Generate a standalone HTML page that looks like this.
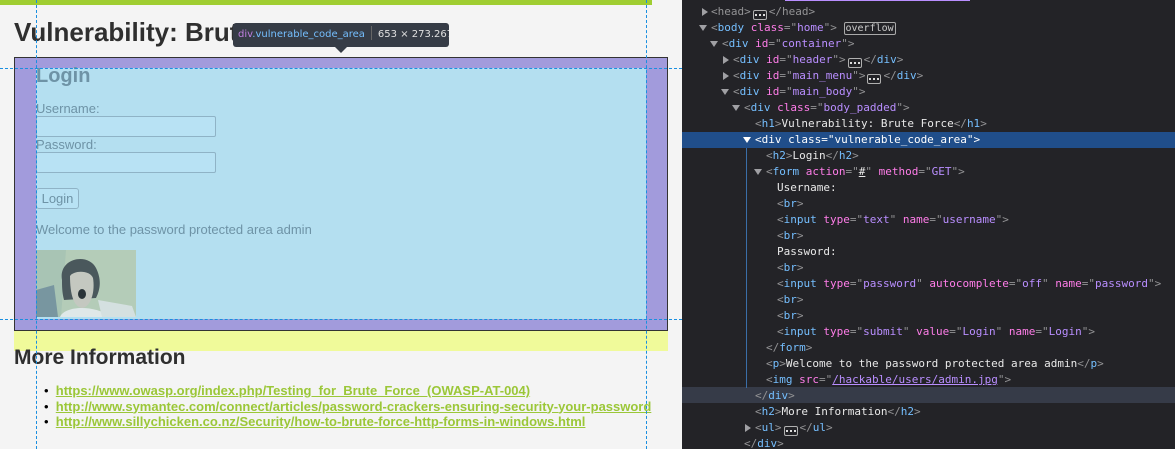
<!DOCTYPE html>
<html><head><meta charset="utf-8"><style>
*{margin:0;padding:0;box-sizing:border-box}
body{width:1175px;height:449px;overflow:hidden;background:#f4f4f4;font-family:"Liberation Sans",sans-serif;position:relative}
.abs{position:absolute}
#left{position:absolute;left:0;top:0;width:682px;height:449px;background:#f4f4f4;overflow:hidden}
h1{position:absolute;left:14px;top:17px;font-size:26px;color:#2f2f2f;font-weight:bold;white-space:nowrap}
.box{position:absolute;left:14px;top:57px;width:654px;height:274px;border:1px solid #333;background:#a29bdc}
.content{position:absolute;left:36px;top:68px;width:610px;height:251px;background:#b4dff0}
.txt{position:absolute;color:#6e93a6;font-size:13px;white-space:nowrap}
.inp{position:absolute;width:180px;height:21px;border:1px solid #8fb3c6;border-radius:2px;background:#b8e2f4}
.yellow{position:absolute;left:14px;top:331px;width:654px;height:20px;background:#f0fa9a}
.vl{position:absolute;top:0;height:449px;border-left:1px dashed #1a8fe0;width:0}
.hl{position:absolute;left:0;width:682px;border-top:1px dashed #1a8fe0;height:0}
a{color:#9bc738;font-weight:bold;font-size:13px;text-decoration:underline;white-space:nowrap}
#dev{position:absolute;left:682px;top:0;width:493px;height:449px;background:#232327;font-family:"DejaVu Sans Mono","Liberation Mono",monospace;font-size:11px;color:#e8e8e8;overflow:hidden}
.ln{position:absolute;height:16px;line-height:16px;white-space:nowrap}
.p{color:#939395}.t{color:#75bfff}.a{color:#ff7de9}.v{color:#b98eff}
.tri{position:absolute;width:0;height:0}
.down{border-left:4px solid transparent;border-right:4px solid transparent;border-top:6px solid #a0a0a4}
.right{border-top:4px solid transparent;border-bottom:4px solid transparent;border-left:6px solid #a0a0a4}
.dots{display:inline-flex;align-items:center;justify-content:center;gap:2px;border:1px solid #b0b0b0;border-radius:2px;width:14px;height:10px;vertical-align:-1px;margin:0 2px}
.dots i{display:block;width:2px;height:2px;background:#ddd}
</style></head><body>
<div id="left">
<div class="abs" style="left:0;top:0;width:652px;height:5px;background:#9fcd31"></div>
<h1>Vulnerability: Brute Force</h1>
<div class="box"></div>
<div class="content"></div>
<div class="txt" style="left:36px;top:65px;font-size:20px;font-weight:bold;color:#6e93a6">Login</div>
<div class="txt" style="left:36px;top:101px">Username:</div>
<div class="inp" style="left:36px;top:116px"></div>
<div class="txt" style="left:36px;top:137px">Password:</div>
<div class="inp" style="left:36px;top:152px"></div>
<div class="abs" style="left:36px;top:188px;width:43px;height:21px;border:1px solid #8fb3c6;border-radius:3px;background:#b8e2f4;font-size:13px;color:#6e93a6;text-align:center;line-height:19px">Login</div>
<div class="txt" style="left:36px;top:222px">Welcome to the password protected area admin</div>
<svg class="abs" style="left:36px;top:250px" width="100" height="67" viewBox="0 0 100 67">
<rect width="100" height="67" fill="#b4ccb8"/>
<path d="M0 0 L30 0 L25 67 L0 67Z" fill="#a8c4b4"/>
<path d="M0 40 L18 35 L22 67 L0 67Z" fill="#7896a0"/>
<path d="M26 30 C22 8 52 2 60 18 C66 30 64 40 60 48 L28 50 C26 42 26 36 26 30Z" fill="#4a585c"/>
<path d="M34 26 C38 20 54 20 57 28 C59 40 56 55 47 58 C38 58 34 45 34 26Z" fill="#c4c8c0"/>
<ellipse cx="46" cy="44" rx="4" ry="5" fill="#2a3438"/>
<path d="M24 67 C28 56 58 54 75 67Z" fill="#dfe8e8"/>
<path d="M62 50 L96 56 L100 67 L66 67Z" fill="#d4e0e0"/>
</svg>
<div class="yellow"></div>
<div class="abs" style="left:14px;top:346px;font-size:21px;font-weight:bold;color:#2f2f2f">More Information</div>
<div class="abs" style="left:44px;top:383px;line-height:15.5px;font-size:13px">
<div>•&nbsp; <a>https://www.owasp.org/index.php/Testing_for_Brute_Force_(OWASP-AT-004)</a></div>
<div>•&nbsp; <a>http://www.symantec.com/connect/articles/password-crackers-ensuring-security-your-password</a></div>
<div>•&nbsp; <a>http://www.sillychicken.co.nz/Security/how-to-brute-force-http-forms-in-windows.html</a></div>
</div>
<div class="vl" style="left:36px"></div>
<div class="vl" style="left:646px"></div>
<div class="hl" style="top:68px"></div>
<div class="hl" style="top:319px"></div>
<div class="abs" style="left:233px;top:23px;width:216px;height:24px;background:#363c46;border-radius:3px;font-family:'DejaVu Sans',sans-serif;font-size:10px;line-height:24px;white-space:nowrap;padding-left:5px;color:#e0e0e0;overflow:hidden"><span style="color:#c07fe0">div</span><span style="color:#75bfff">.vulnerable_code_area</span><span style="display:inline-block;width:1px;height:14px;background:#666;vertical-align:-3px;margin:0 6px"></span>653 × 273.267</div>
<div class="tri" style="left:335px;top:47px;border-left:6px solid transparent;border-right:6px solid transparent;border-top:6px solid #363c46"></div>
</div>
<div id="dev">
<div class="abs" style="left:0;top:132px;width:493px;height:16px;background:#204e8a"></div>
<div class="abs" style="left:0;top:387px;width:493px;height:16px;background:#363b48"></div>
<div class="abs" style="left:64px;top:148px;width:1px;height:240px;background:#3a6ea8"></div>
<div class="abs" style="left:103px;top:0;width:185px;height:1px;background:#b98eff"></div>
<div class="tri right" style="left:20px;top:8px"></div>
<div class="ln" style="left:29px;top:4px;color:#939395">&lt;head&gt;<span class="dots"><i></i><i></i><i></i></span>&lt;/head&gt;</div>
<div class="tri down" style="left:17px;top:25px"></div>
<div class="ln" style="left:29px;top:20px"><span class="p">&lt;</span><span class="t">body</span> <span class="a">class</span><span class="p">="</span><span class="v">home</span><span class="p">"&gt;</span> <span style="border:1px solid #aaa;border-radius:2px;padding:0 1px;color:#ccc;font-size:10px">overflow</span></div>
<div class="tri down" style="left:28px;top:41px"></div>
<div class="ln" style="left:40px;top:36px"><span class="p">&lt;</span><span class="t">div</span> <span class="a">id</span><span class="p">="</span><span class="v">container</span><span class="p">"&gt;</span></div>
<div class="tri right" style="left:41px;top:56px"></div>
<div class="ln" style="left:51px;top:52px"><span class="p">&lt;</span><span class="t">div</span> <span class="a">id</span><span class="p">="</span><span class="v">header</span><span class="p">"&gt;</span><span class="dots"><i></i><i></i><i></i></span><span class="p">&lt;/</span><span class="t">div</span><span class="p">&gt;</span></div>
<div class="tri right" style="left:41px;top:72px"></div>
<div class="ln" style="left:51px;top:68px"><span class="p">&lt;</span><span class="t">div</span> <span class="a">id</span><span class="p">="</span><span class="v">main_menu</span><span class="p">"&gt;</span><span class="dots"><i></i><i></i><i></i></span><span class="p">&lt;/</span><span class="t">div</span><span class="p">&gt;</span></div>
<div class="tri down" style="left:39px;top:89px"></div>
<div class="ln" style="left:51px;top:84px"><span class="p">&lt;</span><span class="t">div</span> <span class="a">id</span><span class="p">="</span><span class="v">main_body</span><span class="p">"&gt;</span></div>
<div class="tri down" style="left:50px;top:105px"></div>
<div class="ln" style="left:62px;top:100px"><span class="p">&lt;</span><span class="t">div</span> <span class="a">class</span><span class="p">="</span><span class="v">body_padded</span><span class="p">"&gt;</span></div>
<div class="ln" style="left:73px;top:116px"><span class="p">&lt;</span><span class="t">h1</span><span class="p">&gt;</span>Vulnerability: Brute Force<span class="p">&lt;/</span><span class="t">h1</span><span class="p">&gt;</span></div>
<div class="tri down" style="left:61px;top:137px;border-top-color:#fff"></div>
<div class="ln" style="left:73px;top:132px;color:#fff">&lt;div class="vulnerable_code_area"&gt;</div>
<div class="ln" style="left:84px;top:148px"><span class="p">&lt;</span><span class="t">h2</span><span class="p">&gt;</span>Login<span class="p">&lt;/</span><span class="t">h2</span><span class="p">&gt;</span></div>
<div class="tri down" style="left:72px;top:169px"></div>
<div class="ln" style="left:84px;top:164px"><span class="p">&lt;</span><span class="t">form</span> <span class="a">action</span><span class="p">="</span><span style="text-decoration:underline">#</span><span class="p">"</span> <span class="a">method</span><span class="p">="</span><span class="v">GET</span><span class="p">"&gt;</span></div>
<div class="ln" style="left:95px;top:180px">Username:</div>
<div class="ln" style="left:95px;top:196px"><span class="p">&lt;</span><span class="t">br</span><span class="p">&gt;</span></div>
<div class="ln" style="left:95px;top:212px"><span class="p">&lt;</span><span class="t">input</span> <span class="a">type</span><span class="p">="</span><span class="v">text</span><span class="p">"</span> <span class="a">name</span><span class="p">="</span><span class="v">username</span><span class="p">"&gt;</span></div>
<div class="ln" style="left:95px;top:228px"><span class="p">&lt;</span><span class="t">br</span><span class="p">&gt;</span></div>
<div class="ln" style="left:95px;top:244px">Password:</div>
<div class="ln" style="left:95px;top:260px"><span class="p">&lt;</span><span class="t">br</span><span class="p">&gt;</span></div>
<div class="ln" style="left:95px;top:276px"><span class="p">&lt;</span><span class="t">input</span> <span class="a">type</span><span class="p">="</span><span class="v">password</span><span class="p">"</span> <span class="a">autocomplete</span><span class="p">="</span><span class="v">off</span><span class="p">"</span> <span class="a">name</span><span class="p">="</span><span class="v">password</span><span class="p">"&gt;</span></div>
<div class="ln" style="left:95px;top:292px"><span class="p">&lt;</span><span class="t">br</span><span class="p">&gt;</span></div>
<div class="ln" style="left:95px;top:308px"><span class="p">&lt;</span><span class="t">br</span><span class="p">&gt;</span></div>
<div class="ln" style="left:95px;top:324px"><span class="p">&lt;</span><span class="t">input</span> <span class="a">type</span><span class="p">="</span><span class="v">submit</span><span class="p">"</span> <span class="a">value</span><span class="p">="</span><span class="v">Login</span><span class="p">"</span> <span class="a">name</span><span class="p">="</span><span class="v">Login</span><span class="p">"&gt;</span></div>
<div class="ln" style="left:84px;top:340px"><span class="p">&lt;/</span><span class="t">form</span><span class="p">&gt;</span></div>
<div class="ln" style="left:84px;top:356px"><span class="p">&lt;</span><span class="t">p</span><span class="p">&gt;</span>Welcome to the password protected area admin<span class="p">&lt;/</span><span class="t">p</span><span class="p">&gt;</span></div>
<div class="ln" style="left:84px;top:372px"><span class="p">&lt;</span><span class="t">img</span> <span class="a">src</span><span class="p">="</span><span class="v" style="text-decoration:underline">/hackable/users/admin.jpg</span><span class="p">"&gt;</span></div>
<div class="ln" style="left:73px;top:388px"><span class="p">&lt;/</span><span class="t">div</span><span class="p">&gt;</span></div>
<div class="ln" style="left:73px;top:404px"><span class="p">&lt;</span><span class="t">h2</span><span class="p">&gt;</span>More Information<span class="p">&lt;/</span><span class="t">h2</span><span class="p">&gt;</span></div>
<div class="tri right" style="left:63px;top:424px"></div>
<div class="ln" style="left:73px;top:420px"><span class="p">&lt;</span><span class="t">ul</span><span class="p">&gt;</span><span class="dots"><i></i><i></i><i></i></span><span class="p">&lt;/</span><span class="t">ul</span><span class="p">&gt;</span></div>
<div class="ln" style="left:62px;top:436px"><span class="p">&lt;/</span><span class="t">div</span><span class="p">&gt;</span></div>
</div>
</body></html>
